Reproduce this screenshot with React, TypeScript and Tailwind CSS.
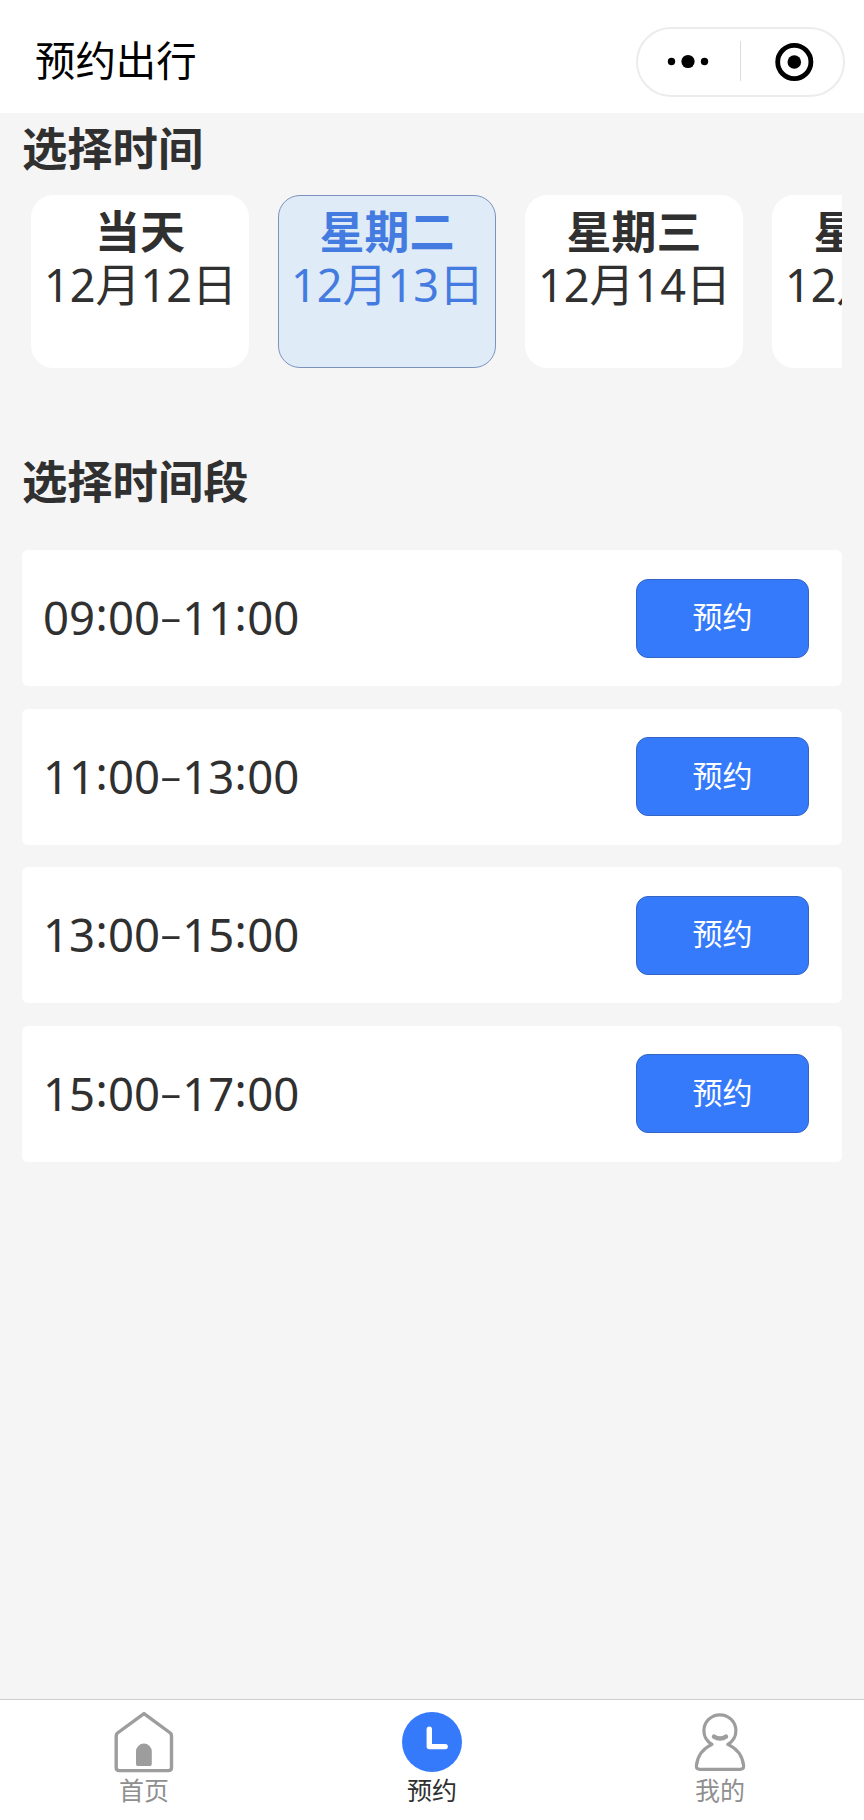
import { useState } from "react";

interface Day {
  name: string;
  date: string;
}

const days: Day[] = [
  { name: "当天", date: "12月12日" },
  { name: "星期二", date: "12月13日" },
  { name: "星期三", date: "12月14日" },
  { name: "星期四", date: "12月15日" },
];

const slots = [
  ["09:00", "11:00"],
  ["11:00", "13:00"],
  ["13:00", "15:00"],
  ["15:00", "17:00"],
];

const Time = ({ value }: { value: string }) => {
  const [h, m] = value.split(":");

  return (
    <>
      {h}
      <span className="relative -top-[4px] inline-block w-[13px] text-center">:</span>
      {m}
    </>
  );
};

const Header = () => (
  <header className="flex h-[113px] items-center justify-between bg-white pl-[35px] pr-[19px]">
    <h1 className="mt-[9px] text-[40.4px] leading-[56px] text-black">预约出行</h1>
    <div className="mt-[10px] flex h-[70px] w-[209px] items-center rounded-full border-2 border-[#ececec]">
      <svg className="h-[66px] w-[205px]" viewBox="0 0 205 66">
        <circle cx="33.5" cy="32.5" r="3.7" />
        <circle cx="50" cy="32.5" r="6.6" />
        <circle cx="66.5" cy="32.5" r="3.7" />
        <path d="M102.5 12v40" stroke="#dcdcdc" />
        <circle cx="156.3" cy="33" r="16.6" fill="none" stroke="#000" strokeWidth="4.8" />
        <circle cx="156.3" cy="33" r="6.8" />
      </svg>
    </div>
  </header>
);

const HomeIcon = () => (
  <svg className="size-[64px]" viewBox="0 0 64 64" fill="none">
    <path
      d="M32 3.6 L58.300 23 Q59.500 24 59.500 26 V57.500 Q59.500 60.600 56.500 60.600 H7.200 Q4.200 60.600 4.200 57.500 V26 Q4.200 24 5.500 23 Z"
      stroke="#9d9d9d"
      strokeWidth="3.4"
      strokeLinejoin="round"
    />
    <path d="M24 53.500V41.500a7.900 7.900 0 0 1 15.800 0v12q0 2.600-2.400 2.600H26.400q-2.400 0-2.400-2.600Z" fill="#9d9d9d" />
  </svg>
);

const ClockIcon = () => (
  <svg className="size-[64px]" viewBox="0 0 64 64" fill="none">
    <circle cx="32" cy="32" r="30" fill="#367afc" />
    <path d="M29.3 19.300V36.600H45.200" stroke="#fff" strokeWidth="5.4" strokeLinecap="round" strokeLinejoin="round" />
  </svg>
);

const UserIcon = () => (
  <svg className="size-[64px]" viewBox="0 0 64 64" fill="none" stroke="#9d9d9d">
    <path
      d="M24 34.400C19 31.500 15.900 26.500 15.900 20.800a16 16 0 0 1 32 0c0 5.700-3.100 10.700-8.100 13.600C49 38.500 54.500 46.500 55.600 55.500q.4 3.800-3.500 3.800H11.900q-3.900 0-3.500-3.800C9.500 46.500 15 38.500 24 34.400Z"
      strokeWidth="3.2"
      strokeLinejoin="round"
    />
    <path d="M26 26.600q6 4 12 0" strokeWidth="4.400" strokeLinecap="round" />
  </svg>
);

const tabs = [
  { label: "首页", icon: <HomeIcon /> },
  { label: "预约", icon: <ClockIcon /> },
  { label: "我的", icon: <UserIcon /> },
];

const App = () => {
  const [selected, setSelected] = useState(1);

  return (
    <div className="flex h-[1820px] w-[864px] flex-col overflow-hidden bg-[#f5f5f5] font-['Noto_Sans','Noto_Sans_CJK_SC',sans-serif] text-[#303030]">
      <Header />

      <main className="flex-1 px-[22px]">
        <h2 className="pt-[3px] text-[45.3px] leading-[66px] font-bold">选择时间</h2>

        <div className="mt-[13px] flex gap-[29px] overflow-hidden pl-[9px]">
          {days.map((day, i) => (
            <button
              key={day.date}
              onClick={() => setSelected(i)}
              className={
                i === selected
                  ? "flex h-[173px] w-[218px] shrink-0 flex-col items-center rounded-[22px] border border-[#7b93bd] bg-[#dfebf7] pt-[9px] text-[#447be0]"
                  : "flex h-[173px] w-[218px] shrink-0 flex-col items-center rounded-[22px] border border-white bg-white pt-[9px]"
              }
            >
              <span className="text-[45px] leading-[54px] font-bold whitespace-nowrap">{day.name}</span>
              <span className="-mt-px pl-px text-[45px] leading-[54px] whitespace-nowrap">{day.date}</span>
            </button>
          ))}
        </div>

        <h2 className="mt-[81px] text-[45.3px] leading-[66px] font-bold">选择时间段</h2>

        <div className="mt-[35px] flex flex-col gap-[22.5px]">
          {slots.map(([from, to]) => (
            <div key={from} className="flex h-[136px] items-center justify-between rounded-[6px] bg-white pl-[21px] pr-[33px]">
              <span className="text-[45.5px] leading-[60px] whitespace-nowrap">
                <Time value={from} />
                <span className="inline-block w-[22px] scale-x-[1.25] text-center font-['Inter'] font-light">-</span>
                <Time value={to} />
              </span>
              <button className="h-[79px] w-[173px] rounded-[12px] border border-[#3565c4] bg-[#367afc] pb-[3px] text-[30px] text-white">
                预约
              </button>
            </div>
          ))}
        </div>
      </main>

      <nav className="flex h-[121px] border-t border-[#cfcfcf] bg-white">
        {tabs.map((tab, i) => (
          <div key={tab.label} className="flex flex-1 flex-col items-center pt-[10px]">
            {tab.icon}
            <span className={i === 1 ? "text-[25px] leading-[32px]" : "text-[25px] leading-[32px] text-[#8f8f8f]"}>
              {tab.label}
            </span>
          </div>
        ))}
      </nav>
    </div>
  );
};

export default App;
